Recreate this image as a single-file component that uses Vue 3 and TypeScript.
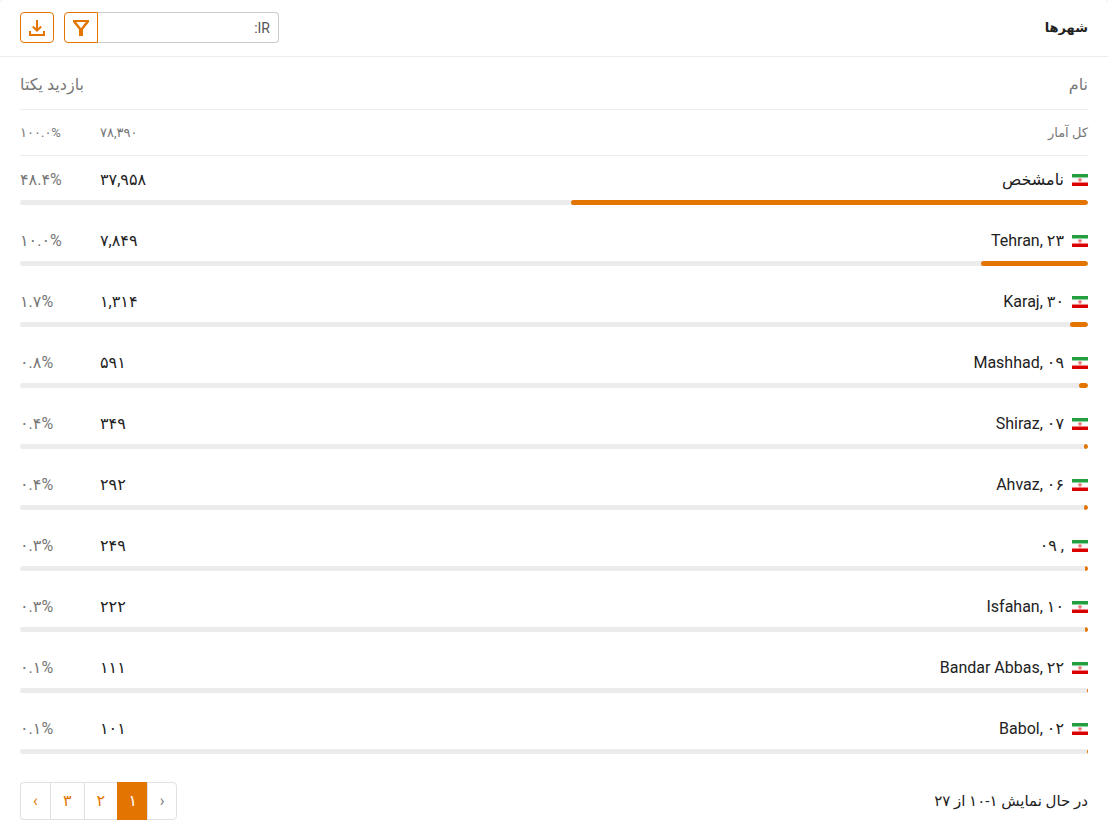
<script setup lang="ts">
import { ref } from 'vue'

interface City {
  name: string
  visits: number
}

const total = 78390
const cities: City[] = [
  { name: 'نامشخص', visits: 37958 },
  { name: 'Tehran, ۲۳', visits: 7849 },
  { name: 'Karaj, ۳۰', visits: 1314 },
  { name: 'Mashhad, ۰۹', visits: 591 },
  { name: 'Shiraz, ۰۷', visits: 349 },
  { name: 'Ahvaz, ۰۶', visits: 292 },
  { name: ', ۰۹', visits: 249 },
  { name: 'Isfahan, ۱۰', visits: 222 },
  { name: 'Bandar Abbas, ۲۲', visits: 111 },
  { name: 'Babol, ۰۲', visits: 101 },
]

const query = ref('IR:')
const page = ref(1)
const pages = [1, 2, 3]

const toPersian = (text: string): string =>
  text.replace(/\d/g, (d) => '۰۱۲۳۴۵۶۷۸۹'[Number(d)])
const count = (n: number): string => toPersian(n.toLocaleString('en-US'))
const share = (n: number): string => toPersian(((n / total) * 100).toFixed(1)) + '%'
const barWidth = (n: number): string => ((n / total) * 100).toFixed(1) + '%'
</script>

<template>
  <main class="card" dir="rtl" lang="fa">
    <header class="card-header">
      <h1>شهرها</h1>
      <div class="tools">
        <form class="search" @submit.prevent>
          <input v-model="query" type="text" aria-label="جستجو" />
          <button type="submit" class="tool joined" aria-label="فیلتر">
            <svg viewBox="0 0 18 18" width="18" height="18" aria-hidden="true">
              <path d="M1 1H17V3L11 10.6V17H7V10.6L1 3ZM4.2 3L9 9.2L13.8 3Z" fill="currentColor" fill-rule="evenodd" />
            </svg>
          </button>
        </form>
        <button type="button" class="tool" aria-label="دریافت">
          <svg viewBox="0 0 18 18" width="18" height="18" aria-hidden="true">
            <path d="M9 1V11.5M4.8 7.5L9 11.7L13.2 7.5M2 12V16H16V12" fill="none" stroke="currentColor" stroke-width="2" />
          </svg>
        </button>
      </div>
    </header>

    <section class="card-body">
      <table>
        <thead>
          <tr class="headings">
            <th scope="col">نام</th>
            <th scope="col" colspan="2" class="end">بازدید یکتا</th>
          </tr>
          <tr class="totals">
            <th scope="row">کل آمار</th>
            <td class="number">{{ count(total) }}</td>
            <td class="number percent">۱۰۰.۰%</td>
          </tr>
        </thead>
        <tbody v-for="city in cities" :key="city.name">
          <tr class="city">
            <th scope="row">
              <span class="place">
                <svg class="flag" viewBox="0 0 16 12" width="16" height="12" role="img" aria-label="ایران">
                  <path d="M0 0H16V12H0Z" fill="#fff" />
                  <path d="M0 0H16V3.5H0Z" fill="#239f40" />
                  <path d="M0 8.5H16V12H0Z" fill="#da0000" />
                  <path d="M0 3.7H16" stroke="#9bd3a8" stroke-width="0.6" stroke-dasharray="1 0.5" />
                  <path d="M0 8.3H16" stroke="#f09090" stroke-width="0.6" stroke-dasharray="1 0.5" />
                  <path d="M6.2 4.6H9.8V6.4L8.6 7.8H7.4L6.2 6.4Z" fill="#f5a3a3" />
                  <path d="M8 4.2V7.8M6.4 5.6H9.6" fill="none" stroke="#e86a6a" stroke-width="0.8" />
                </svg>
                <span>{{ city.name }}</span>
              </span>
            </th>
            <td class="number">{{ count(city.visits) }}</td>
            <td class="number percent">{{ share(city.visits) }}</td>
          </tr>
          <tr class="bar-row">
            <td colspan="3">
              <div class="track"><div class="fill" :style="{ width: barWidth(city.visits) }"></div></div>
            </td>
          </tr>
        </tbody>
      </table>
    </section>

    <footer class="card-footer">
      <p>در حال نمایش ۱-۱۰ از ۲۷</p>
      <nav class="pagination" aria-label="صفحه‌ها">
        <button type="button" :disabled="page === 1" aria-label="قبلی" @click="page--">‹</button>
        <button
          v-for="n in pages"
          :key="n"
          type="button"
          :class="{ active: n === page }"
          :aria-current="n === page ? 'page' : undefined"
          @click="page = n"
        >{{ toPersian(String(n)) }}</button>
        <button type="button" :disabled="page === pages.length" aria-label="بعدی" @click="page++">›</button>
      </nav>
    </footer>
  </main>
</template>

<style>
body {
  margin: 0;
  background: #f2f2f2;
}
</style>

<style scoped>
.card {
  min-height: 100vh;
  box-sizing: border-box;
  background: #fff;
  border-radius: 4px 4px 0 0;
  color: #222;
  font-family: Roboto, 'DejaVu Sans', sans-serif;
  font-size: 16px;
  line-height: 24px;
}
button,
input {
  box-sizing: border-box;
  margin: 0;
  font: inherit;
}
.card-header {
  display: flex;
  align-items: center;
  justify-content: space-between;
  padding: 12px 20px 13px;
  border-bottom: 1px solid #ececec;
}
h1 {
  margin: 0;
  font-size: 13px;
  line-height: 24px;
  font-weight: 700;
}
.tools {
  display: flex;
  gap: 10px;
}
.search {
  display: flex;
}
.search input {
  width: 181px;
  height: 31px;
  padding: 0 8px;
  border: 1px solid #ccc;
  border-left: 0;
  border-radius: 0 4px 4px 0;
  background: #fff;
  color: #555;
  font-size: 14px;
}
.tool {
  display: flex;
  align-items: center;
  justify-content: center;
  width: 34px;
  height: 31px;
  padding: 0;
  border: 1px solid #e37400;
  border-radius: 4px;
  background: #fff;
  color: #e37400;
}
.tool.joined {
  border-radius: 4px 0 0 4px;
}
.card-body {
  padding: 0 20px;
}
table {
  width: 100%;
  border-collapse: separate;
  border-spacing: 0;
}
th,
td {
  padding: 0;
  font-weight: 400;
  text-align: right;
}
.headings th {
  box-sizing: border-box;
  height: 53px;
  padding-top: 4px;
  border-bottom: 1px solid #ececec;
  color: #777;
}
.headings .end {
  text-align: left;
}
.totals th,
.totals td {
  box-sizing: border-box;
  height: 46px;
  border-bottom: 1px solid #ececec;
  color: #777;
  font-size: 13px;
}
.city th,
.city td {
  box-sizing: border-box;
  height: 44px;
  padding-top: 4px;
}
.number {
  width: 80px;
  direction: ltr;
  text-align: left;
}
.city .percent {
  color: #777;
}
.place {
  display: flex;
  align-items: center;
  gap: 8px;
}
.flag {
  flex: none;
}
.bar-row td {
  padding-bottom: 12px;
}
.track {
  height: 5px;
  border-radius: 3px;
  background: #ececec;
  overflow: hidden;
}
.fill {
  height: 5px;
  border-radius: 3px;
  background: #e37400;
}
.card-footer {
  display: flex;
  align-items: center;
  justify-content: space-between;
  padding: 16px 20px 12px;
}
.card-footer p {
  margin: 0;
  font-size: 15px;
}
.pagination {
  display: flex;
}
.pagination button {
  min-width: 30px;
  height: 38px;
  padding: 0 12px;
  border: 1px solid #dee2e6;
  border-right: 0;
  background: #fff;
  color: #e37400;
  line-height: 20px;
}
.pagination button:first-child,
.pagination button:last-child {
  width: 30px;
  padding: 0;
}
.pagination button:first-child {
  border-right: 1px solid #dee2e6;
  border-radius: 0 4px 4px 0;
}
.pagination button:last-child {
  border-radius: 4px 0 0 4px;
}
.pagination button:disabled {
  color: #777;
}
.pagination .active {
  padding: 0 10px;
  border-color: #e37400;
  background: #e37400;
  color: #fff;
}
</style>
